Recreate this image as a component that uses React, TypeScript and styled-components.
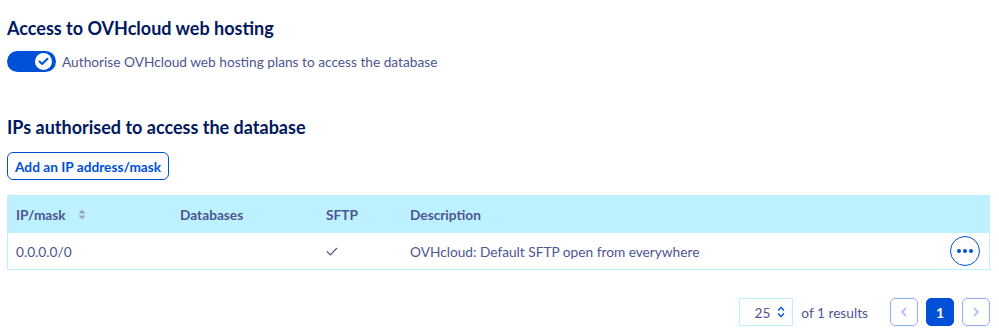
import React from "react";
import styled, { createGlobalStyle } from "styled-components";

const Global = createGlobalStyle`
  html, body { margin: 0; padding: 0; background: #fff; }
  body { font-family: "Source Sans Pro", Lato, "Liberation Sans", sans-serif; color: #4d5592; }
`;

const Page = styled.div`
  padding: 16px 9px 0 7px;
  display: flex;
  flex-direction: column;
`;

const Heading = styled.h2<{ $mt?: number }>`
  margin: ${(p) => p.$mt ?? 0}px 0 0 0;
  font-size: 18px;
  line-height: 24px;
  font-weight: 700;
  color: #00185e;
`;

const ToggleRow = styled.label`
  display: flex;
  align-items: center;
  gap: 6px;
  margin-top: 11px;
  font-size: 13.7px;
  line-height: 20px;
`;

const Switch = styled.span`
  width: 49px;
  height: 21px;
  border-radius: 11px;
  background: #0050d7;
  display: flex;
  align-items: center;
  justify-content: flex-end;
  padding-right: 4px;
  box-sizing: border-box;
`;

const Knob = styled.span`
  width: 17px;
  height: 17px;
  border-radius: 50%;
  background: #fff;
  display: flex;
  align-items: center;
  justify-content: center;
`;

const OutlineButton = styled.button`
  align-self: flex-start;
  margin-top: 13px;
  height: 28px;
  padding: 0 7px 0 7px;
  border: 1px solid #0050d7;
  border-radius: 6px;
  background: #fff;
  color: #0050d7;
  font-family: inherit;
  font-weight: 700;
  font-size: 13.7px;
`;

const Table = styled.div`
  margin-top: 15px;
  border: 1px solid #bef1ff;
  display: flex;
  flex-direction: column;
`;

const Row = styled.div<{ $head?: boolean }>`
  display: grid;
  grid-template-columns: 164px 146px 84px 1fr 40px;
  align-items: center;
  height: ${(p) => (p.$head ? 37 : 36)}px;
  padding-left: 8px;
  background: ${(p) => (p.$head ? "#bef1ff" : "#fff")};
  font-size: 13.7px;
  font-weight: ${(p) => (p.$head ? 700 : 400)};
  color: #4d5592;
`;

const Cell = styled.div`
  display: flex;
  align-items: center;
  gap: 12px;
`;

const DotsButton = styled.button`
  width: 30px;
  height: 30px;
  border-radius: 50%;
  border: 1.5px solid #0050d7;
  background: #fff;
  display: flex;
  align-items: center;
  justify-content: center;
  padding: 0;
  justify-self: end;
  margin-right: 9px;
`;

const Dot = styled.span`
  width: 4px;
  height: 4px;
  border-radius: 50%;
  background: #0050d7;
  margin: 0 1px;
`;

const Pager = styled.div`
  margin-top: 28px;
  display: flex;
  justify-content: flex-end;
  align-items: center;
  font-size: 13.7px;
`;

const Select = styled.div`
  width: 54px;
  height: 28px;
  box-sizing: border-box;
  border: 1px solid #bef1ff;
  display: flex;
  align-items: center;
  justify-content: flex-end;
  gap: 7px;
  padding-right: 7px;
  color: #4d5592;
`;

const Results = styled.span`
  margin-left: 8px;
  margin-right: 14px;
`;

const PageBtn = styled.button<{ $active?: boolean }>`
  width: 28px;
  height: 28px;
  box-sizing: border-box;
  border-radius: 5px;
  border: 1px solid ${(p) => (p.$active ? "#0050d7" : "#8fb0ee")};
  background: ${(p) => (p.$active ? "#0050d7" : "#fff")};
  color: ${(p) => (p.$active ? "#fff" : "#8fb0ee")};
  font-family: inherit;
  font-weight: 700;
  font-size: 14px;
  display: flex;
  align-items: center;
  justify-content: center;
  padding: 0;
  margin-left: 8px;
`;

export default function App() {
  return (
    <>
      <Global />
      <Page>
        <Heading>Access to OVHcloud web hosting</Heading>
        <ToggleRow>
          <Switch>
            <Knob>
              <svg width="11" height="9" viewBox="0 0 11 9">
                <path d="M1.5 4.5 L4.2 7 L9.5 1.8" fill="none" stroke="#0050d7" strokeWidth="2" strokeLinecap="round" strokeLinejoin="round" />
              </svg>
            </Knob>
          </Switch>
          Authorise OVHcloud web hosting plans to access the database
        </ToggleRow>
        <Heading $mt={43}>IPs authorised to access the database</Heading>
        <OutlineButton>Add an IP address/mask</OutlineButton>
        <Table>
          <Row $head>
            <Cell>
              IP/mask
              <svg width="8" height="11" viewBox="0 0 8 11">
                <path d="M4 0.5 L7.5 4.5 H0.5 Z M4 10.5 L7.5 6.5 H0.5 Z" fill="#9aa1c4" />
              </svg>
            </Cell>
            <Cell>Databases</Cell>
            <Cell>SFTP</Cell>
            <Cell>Description</Cell>
            <Cell />
          </Row>
          <Row>
            <Cell>0.0.0.0/0</Cell>
            <Cell />
            <Cell>
              <svg width="12" height="9" viewBox="0 0 12 9">
                <path d="M1 4.5 L4.3 7.8 L11 1" fill="none" stroke="#4d5592" strokeWidth="1.2" />
              </svg>
            </Cell>
            <Cell>OVHcloud: Default SFTP open from everywhere</Cell>
            <DotsButton aria-label="actions">
              <Dot />
              <Dot />
              <Dot />
            </DotsButton>
          </Row>
        </Table>
        <Pager>
          <Select>
            25
            <svg width="8" height="12" viewBox="0 0 8 12">
              <path d="M1 4.5 L4 1.5 L7 4.5 M1 7.5 L4 10.5 L7 7.5" fill="none" stroke="#0050d7" strokeWidth="1.4" />
            </svg>
          </Select>
          <Results>of 1 results</Results>
          <PageBtn aria-label="previous">
            <svg width="6" height="10" viewBox="0 0 6 10">
              <path d="M5 1 L1 5 L5 9" fill="none" stroke="#8fb0ee" strokeWidth="1.3" />
            </svg>
          </PageBtn>
          <PageBtn $active>1</PageBtn>
          <PageBtn aria-label="next">
            <svg width="6" height="10" viewBox="0 0 6 10">
              <path d="M1 1 L5 5 L1 9" fill="none" stroke="#8fb0ee" strokeWidth="1.3" />
            </svg>
          </PageBtn>
        </Pager>
      </Page>
    </>
  );
}
